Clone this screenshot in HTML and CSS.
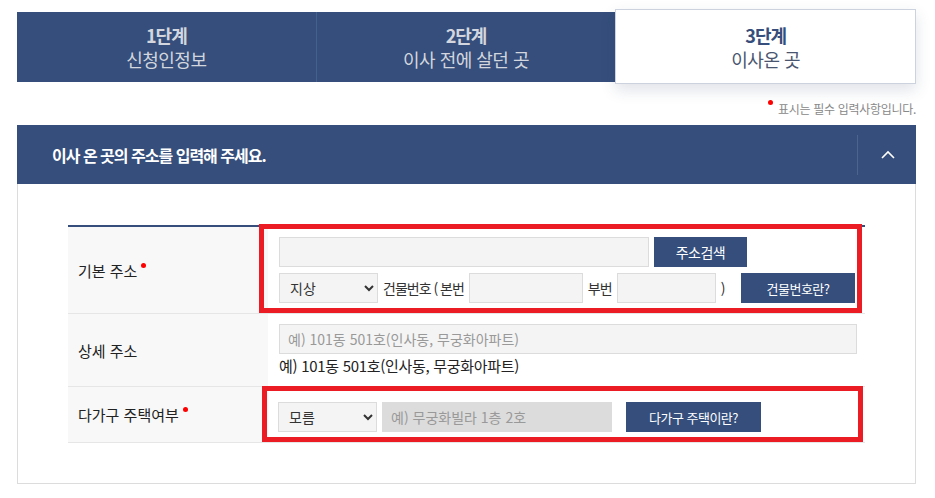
FILE: index.html
```html
<!DOCTYPE html>
<html lang="ko">
<head>
  <meta charset="UTF-8" />
  <title>전입신고 - 3단계</title>
  <link rel="stylesheet" href="styles.css">
</head>
<body>
  <div class="wrap">
    <div class="steps">
      <div class="step">
        <strong>1단계</strong>
        <span>신청인정보</span>
      </div>
      <div class="step">
        <strong>2단계</strong>
        <span>이사 전에 살던 곳</span>
      </div>
      <div class="step current">
        <strong>3단계</strong>
        <span>이사온 곳</span>
      </div>
    </div>

    <p class="notice"><i class="dot"></i>표시는 필수 입력사항입니다.</p>

    <div class="panel-head">
      <h2>이사 온 곳의 주소를 입력해 주세요.</h2>
      <button class="fold" type="button">
        <svg width="16" height="10" viewBox="0 0 16 10"><path d="M2 8 L8 2 L14 8" fill="none" stroke="#fff" stroke-width="1.6"/></svg>
      </button>
    </div>

    <div class="panel-body">
      <table class="form">
        <colgroup>
          <col class="col-label">
          <col>
        </colgroup>
        <tr class="row-base">
          <th>기본 주소<i class="dot"></i></th>
          <td>
            <div class="line">
              <input class="addr" type="text" />
              <button class="btn btn-search" type="button">주소검색</button>
            </div>
            <div class="line">
              <select class="sel"><option>지상</option></select>
              <span class="lbl">건물번호 ( 본번</span>
              <input class="num" type="text" />
              <span class="lbl">부번</span>
              <input class="num num-sub" type="text" />
              <span class="lbl">)</span>
              <button class="btn btn-bnum" type="button">건물번호란?</button>
            </div>
            <span class="mark mark-1"></span>
          </td>
        </tr>
        <tr class="row-detail">
          <th>상세 주소</th>
          <td>
            <input class="detail" type="text" placeholder="예) 101동 501호(인사동, 무궁화아파트)" />
            <p class="hint">예) 101동 501호(인사동, 무궁화아파트)</p>
          </td>
        </tr>
        <tr class="row-multi">
          <th>다가구 주택여부<i class="dot"></i></th>
          <td>
            <div class="line">
              <select class="sel"><option>모름</option></select>
              <input class="unit" type="text" placeholder="예) 무궁화빌라 1층 2호" disabled />
              <button class="btn btn-multi" type="button">다가구 주택이란?</button>
            </div>
            <span class="mark mark-2"></span>
          </td>
        </tr>
      </table>
    </div>
  </div>
</body>
</html>
```

FILE: styles.css
```css
* {
  margin: 0;
  padding: 0;
  box-sizing: border-box;
}

body {
  background: #fff;
  font-family: "Noto Sans CJK KR", "Noto Sans", sans-serif;
  color: #333;
}

.wrap {
  width: 899px;
  margin-left: 17px;
  padding-top: 12px;
}

/* 단계 탭 */
.steps {
  display: flex;
  height: 70px;
  background: #354e7b;
}

.step {
  flex: 1;
  display: flex;
  flex-direction: column;
  align-items: center;
  justify-content: center;
  color: #d3d6de;
  line-height: 24px;
}

.step + .step {
  border-left: 1px solid #45608c;
}

.step strong {
  font-size: 18px;
  font-weight: bold;
  letter-spacing: -1px;
}

.step span {
  font-size: 18px;
  letter-spacing: -0.5px;
}

.step.current {
  background: #fff;
  color: #354e7b;
  margin: -3px 0 -2px;
  border: 1px solid #ccd3de;
  box-shadow: 0 6px 14px rgba(40, 60, 100, 0.15);
  z-index: 1;
}

.step.current span {
  color: #4a5670;
}

.notice {
  margin-top: 18px;
  height: 25px;
  text-align: right;
  font-size: 12px;
  color: #888;
  letter-spacing: -0.3px;
}

.dot {
  display: inline-block;
  width: 5px;
  height: 5px;
  border-radius: 50%;
  background: #f00;
  vertical-align: top;
  margin: 0 5px 0 2px;
}

/* 패널 */
.panel-head {
  display: flex;
  align-items: center;
  height: 59px;
  background: #354e7b;
  padding-left: 35px;
}

.panel-head h2 {
  flex: 1;
  font-size: 16px;
  font-weight: bold;
  color: #fff;
  letter-spacing: -1px;
}

.fold {
  width: 59px;
  height: 40px;
  background: none;
  border: none;
  border-left: 1px solid #4c6590;
  display: flex;
  align-items: center;
  justify-content: center;
  padding-left: 2px;
}

.panel-body {
  border: 1px solid #dcdcdc;
  border-top: none;
  padding: 41px 50px 40px;
}

.form {
  width: 100%;
  table-layout: fixed;
  border-collapse: collapse;
  border-top: 2px solid #354e7b;
  font-size: 15px;
}

.col-label {
  width: 200px;
}

.form tr {
  border-bottom: 1px solid #e6e6e6;
}

.form th {
  background: #f8f8f8;
  text-align: left;
  font-weight: normal;
  padding-left: 10px;
  color: #222;
}

.form th .dot {
  margin: 3px 0 0 4px;
}

.form td {
  position: relative;
  padding: 10px 10px 10px 11px;
}

.line {
  display: flex;
  align-items: center;
  gap: 5px;
}

.line > * {
  flex: none;
}

.line + .line {
  margin-top: 6px;
}

input,
select {
  height: 30px;
  border: 1px solid #dcdcdc;
  background: #f4f4f4;
  font-family: inherit;
  font-size: 14px;
  color: #333;
}

input::placeholder {
  color: #999;
}

.addr { width: 370px; }
.num { width: 114px; }
.num-sub { width: 99px; }
.sel {
  width: 99px;
  padding-left: 6px;
  font-size: 14px;
}
.detail {
  width: 578px;
  padding-left: 8px;
}
.unit {
  width: 230px;
  background: #dcdcdc;
  border-color: #dcdcdc;
  padding-left: 8px;
}

.lbl {
  font-size: 14px;
  color: #333;
  white-space: nowrap;
  letter-spacing: -1px;
}

.btn {
  height: 30px;
  border: none;
  background: #354e7b;
  color: #fff;
  font-family: inherit;
  font-size: 14px;
  letter-spacing: -0.5px;
  white-space: nowrap;
}

.btn-search { width: 93px; }
.btn-bnum {
  width: 114px;
  margin-left: auto;
  font-size: 13px;
}
.btn-multi {
  width: 135px;
  margin-left: 9px;
  font-size: 13px;
}

.hint {
  font-size: 15px;
  line-height: 20px;
  color: #222;
  margin-top: 2px;
  letter-spacing: -0.3px;
}

.row-base { height: 85px; }
.row-detail td { padding-bottom: 10px; }
.row-multi td { padding: 15px 10px 10px 10px; }

/* 안내용 빨간 표시 */
.mark {
  position: absolute;
  border: 5px solid #ec1c24;
  pointer-events: none;
}

.mark-1 {
  left: -9px;
  top: -3px;
  right: 3px;
  bottom: 0;
}

.mark-2 {
  left: -6px;
  top: -1px;
  right: 2px;
  bottom: 0;
}
```
